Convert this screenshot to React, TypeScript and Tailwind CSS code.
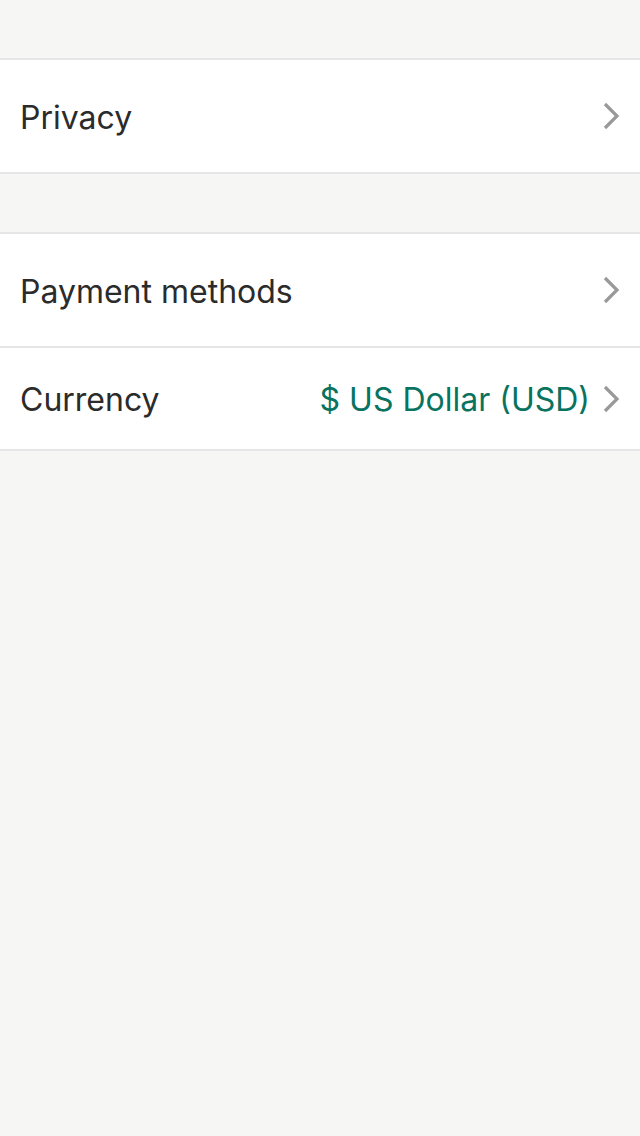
function Row({ label, value, h }: { label: string; value?: string; h: string }) {
  return (
    <div className={`flex items-center justify-between bg-white pl-[20px] pr-[20px] pt-[3px] ${h}`}>
      <span className="text-[32px] text-[#2b2b2b]">{label}</span>
      <div className="flex items-center gap-[12px]">
        {value && <span className="text-[32px] text-[#08735f]">{value}</span>}
        <svg width="18" height="28" viewBox="0 0 18 28" fill="none" className="-mt-[3px]">
          <path d="M3 2 L15 14 L3 26" stroke="#999999" strokeWidth="3.2" />
        </svg>
      </div>
    </div>
  );
}

export default function App() {
  return (
    <div className="min-h-[1136px] bg-[#f6f6f4] pt-[58px] font-['Inter','Liberation_Sans',sans-serif]">
      <div className="border-y-2 border-[#e6e6e6]">
        <Row label="Privacy" h="h-[112px]" />
      </div>
      <div className="mt-[58px] border-y-2 border-[#e6e6e6]">
        <Row label="Payment methods" h="h-[112px]" />
        <div className="h-[2px] bg-[#e6e6e6]" />
        <Row label="Currency" value="$ US Dollar (USD)" h="h-[101px]" />
      </div>
    </div>
  );
}
